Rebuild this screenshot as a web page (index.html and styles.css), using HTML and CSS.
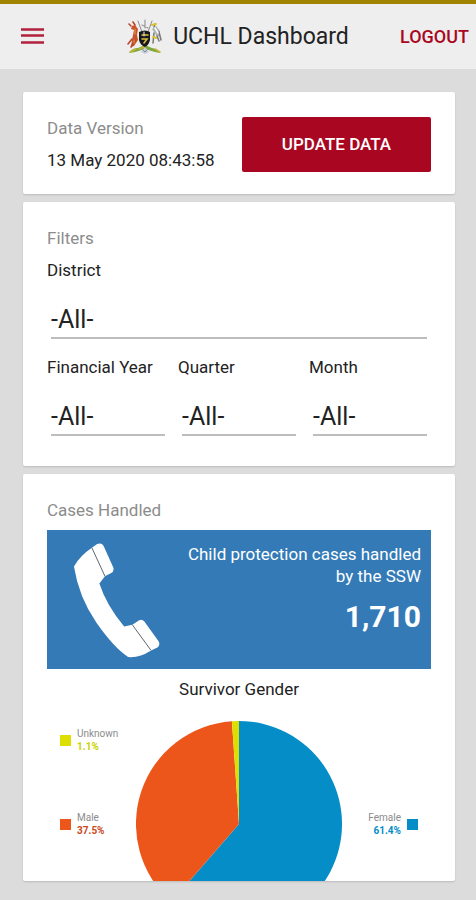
FILE: index.html
```html
<!DOCTYPE html>
<html lang="en">
<head>
  <meta charset="UTF-8" />
  <meta name="viewport" content="width=device-width, initial-scale=1.0" />
  <title>UCHL Dashboard</title>
  <link rel="stylesheet" href="styles.css">
</head>
<body>
  <header class="topbar">
    <button class="menu" type="button" aria-label="Menu">
      <svg width="24" height="18" viewBox="0 0 24 18">
        <path d="M0 1.5h23M0 7.5h23M0 14.5h23" stroke="#b3213c" stroke-width="2.6" />
      </svg>
    </button>
    <div class="brand">
      <svg width="36" height="36" viewBox="0 0 36 36" fill="none" stroke-linecap="round">
        <!-- mound -->
        <path d="M2 34q3-5 9-5l7-3 7 3q6 1 8 5l-5-1-10-3-10 3z" fill="#79a83b" />
        <path d="M3 33l6-3M28 30l5 3M12 30l5-2" stroke="#c9b338" stroke-width="1.5" />
        <path d="M18 28l-4 5 4 2 4-2z" fill="#c9ccd8" />
        <path d="M16 31l2 2 2-2" stroke="#7b88a5" />
        <!-- antelope -->
        <path d="M5 7l3-1 3 4-1 6 1 5-2 3-2 3-3 1 1-7 1-5 1-5-3-1z" fill="#c9532b" />
        <path d="M4 7L2 5M8 6L6 3M5 20l-4 5M8 21l-4 7" stroke="#b8472c" stroke-width="1.6" />
        <path d="M8 10v5M7 21v3" stroke="#e6a13d" />
        <!-- crane -->
        <path d="M25 10l4-3 4 5v5l-3 1-2-4z" fill="#aeb2b5" />
        <path d="M27 8l1-3M30 17l2 5M32 13l2 8M27 14l-1 10" stroke="#777" stroke-width="1.5" />
        <path d="M25 6l4-1M26 18l3 1" stroke="#dcc22d" stroke-width="2" />
        <path d="M28 9l3 5" stroke="#fff" stroke-width="1.5" />
        <!-- shield and spears -->
        <path d="M11 2l4 11M25 2l-4 11" stroke="#8b8b8b" />
        <path d="M18 1v8M15 6l6 3" stroke="#999" stroke-width="1.2" />
        <path d="M12 13q6-3 11 0v8q-1 5-5 7-5-2-6-7z" fill="#181818" />
        <path d="M15 16h6M15 20h5l-3 4" stroke="#d9bd45" stroke-width="1.6" />
        <path d="M17 13v4" stroke="#eee" />
      </svg>
      <h1>UCHL Dashboard</h1>
    </div>
    <button class="logout" type="button">LOGOUT</button>
  </header>

  <main class="container">
    <section class="card version">
      <div>
        <h2>Data Version</h2>
        <p>13 May 2020 08:43:58</p>
      </div>
      <button class="update" type="button">UPDATE DATA</button>
    </section>

    <section class="card filters">
      <h2>Filters</h2>
      <div class="field">
        <label for="district">District</label>
        <select id="district"><option>-All-</option></select>
      </div>
      <div class="periods">
        <div class="field">
          <label for="year">Financial Year</label>
          <select id="year"><option>-All-</option></select>
        </div>
        <div class="field">
          <label for="quarter">Quarter</label>
          <select id="quarter"><option>-All-</option></select>
        </div>
        <div class="field">
          <label for="month">Month</label>
          <select id="month"><option>-All-</option></select>
        </div>
      </div>
    </section>

    <section class="card cases">
      <h2>Cases Handled</h2>
      <div class="banner">
        <svg width="88" height="116" viewBox="96 60 270 354">
          <path d="M156 75L170 65Q184 60 190 71L220 138Q223 149 212 155L194 164L177 186Q198 252 253 318L278 313L299 299Q308 294 315 303L358 363Q365 374 355 383L334 393Q301 415 265 412Q222 384 168 307Q113 226 99 134Q116 102 156 75Z" fill="#fff" />
          <path d="M154 77L194 164M278 313L335 391" stroke="#59636b" stroke-width="3" />
        </svg>
        <div class="banner-text">
          <p>Child protection cases handled by the SSW</p>
          <strong>1,710</strong>
        </div>
      </div>

      <h3>Survivor Gender</h3>
      <div class="chart">
        <ul class="legend">
          <li class="unknown"><span class="swatch"></span><div>Unknown<b>1.1%</b></div></li>
          <li class="male"><span class="swatch"></span><div>Male<b>37.5%</b></div></li>
        </ul>
        <svg width="206" height="206" viewBox="-103 -103 206 206">
          <path d="M0 0V-103A103 103 0 1 1 -67.6 77.7Z" fill="#058dc7" />
          <path d="M0 0L-67.6 77.7A103 103 0 0 1 -7.1 -102.8Z" fill="#ed561b" />
          <path d="M0 0L-7.1 -102.8A103 103 0 0 1 0 -103Z" fill="#dddf00" />
        </svg>
        <ul class="legend right">
          <li class="female"><div>Female<b>61.4%</b></div><span class="swatch"></span></li>
        </ul>
      </div>
    </section>
  </main>
</body>
</html>
```
FILE: styles.css
```css
:root {
  --bg: #dcdcdc;
  --bar: #eeeeee;
  --red: #a90721;
  --blue: #337ab7;
  --muted: #8c8c8c;
  --text: #222;
}

* {
  box-sizing: border-box;
}

body {
  margin: 0;
  height: 100vh;
  display: flex;
  flex-direction: column;
  font-family: Roboto, sans-serif;
  font-size: 17px;
  line-height: 32px;
  color: var(--text);
  background: var(--bg);
}

h1, h2, h3, p, ul {
  margin: 0;
  padding: 0;
  font-size: 17px;
  font-weight: 400;
}

button {
  font-family: inherit;
  border: none;
  cursor: pointer;
}

svg {
  display: block;
  flex-shrink: 0;
}

.topbar {
  display: grid;
  grid-template-columns: 1fr auto 1fr;
  align-items: center;
  flex-shrink: 0;
  height: 69px;
  padding: 0 7px;
  background: var(--bar);
  border-top: 4px solid #a08400;
}

.menu {
  justify-self: start;
  padding: 8px 14px;
  background: none;
}

.brand {
  display: flex;
  align-items: center;
  gap: 10px;
}

.brand h1 {
  font-size: 23px;
}

.logout {
  justify-self: end;
  padding: 8px 0;
  background: none;
  color: var(--red);
  font-size: 18px;
  font-weight: 500;
}

.container {
  flex: 1;
  min-height: 0;
  display: flex;
  flex-direction: column;
  gap: 8px;
  padding: 23px 21px 19px 23px;
}

.card {
  flex-shrink: 0;
  padding: 20px 24px 18px;
  background: #fff;
  border-radius: 2px;
  box-shadow: 0 1px 2px rgba(0, 0, 0, 0.15);
}

.card h2 {
  color: var(--muted);
}

.version {
  display: flex;
  align-items: center;
  justify-content: space-between;
}

.update {
  width: 189px;
  height: 55px;
  background: var(--red);
  color: #fff;
  font-size: 17px;
  font-weight: 500;
  border-radius: 2px;
}

.filters {
  padding-bottom: 30px;
}

.field label {
  display: block;
}

.field select {
  display: block;
  appearance: none;
  width: calc(100% - 8px);
  height: 40px;
  margin: 13px 4px 0;
  padding: 2px 0 0;
  border: none;
  border-bottom: 2px solid #bdbdbd;
  border-radius: 0;
  background: none;
  color: var(--text);
  font-family: inherit;
  font-size: 25px;
}

.periods {
  display: grid;
  grid-template-columns: repeat(3, 1fr);
  gap: 9px;
  margin-top: 12px;
}

/* last card fills what is left, the chart runs off its bottom edge */
.cases {
  flex: 1;
  min-height: 0;
  overflow: hidden;
}

.banner {
  display: flex;
  justify-content: space-between;
  min-height: 139px;
  margin-top: 4px;
  padding: 12px 10px 8px 26px;
  background: var(--blue);
  color: #fff;
}

.banner-text {
  width: 244px;
  padding-top: 1px;
  line-height: 22px;
  text-align: right;
}

.banner-text strong {
  display: block;
  margin-top: 10px;
  font-size: 30px;
  line-height: 40px;
}

.cases h3 {
  margin: 4px 0 16px;
  text-align: center;
}

.chart {
  display: grid;
  grid-template-columns: 1fr 206px 1fr;
}

.legend {
  display: flex;
  flex-direction: column;
  gap: 58px;
  padding: 6px 0 0 13px;
  list-style: none;
  font-size: 10px;
  line-height: 13px;
  color: var(--muted);
}

.legend li {
  display: flex;
  align-items: center;
  gap: 6px;
}

.legend.right {
  justify-content: center;
  align-items: flex-end;
  padding: 0 13px 0 0;
  text-align: right;
}

.legend b {
  display: block;
}

.swatch {
  width: 11px;
  height: 11px;
}

.unknown b { color: #c8d400; }
.unknown .swatch { background: #dddf00; }
.male b { color: #c9481c; }
.male .swatch { background: #ed561b; }
.female b { color: #058dc7; }
.female .swatch { background: #058dc7; }
```
